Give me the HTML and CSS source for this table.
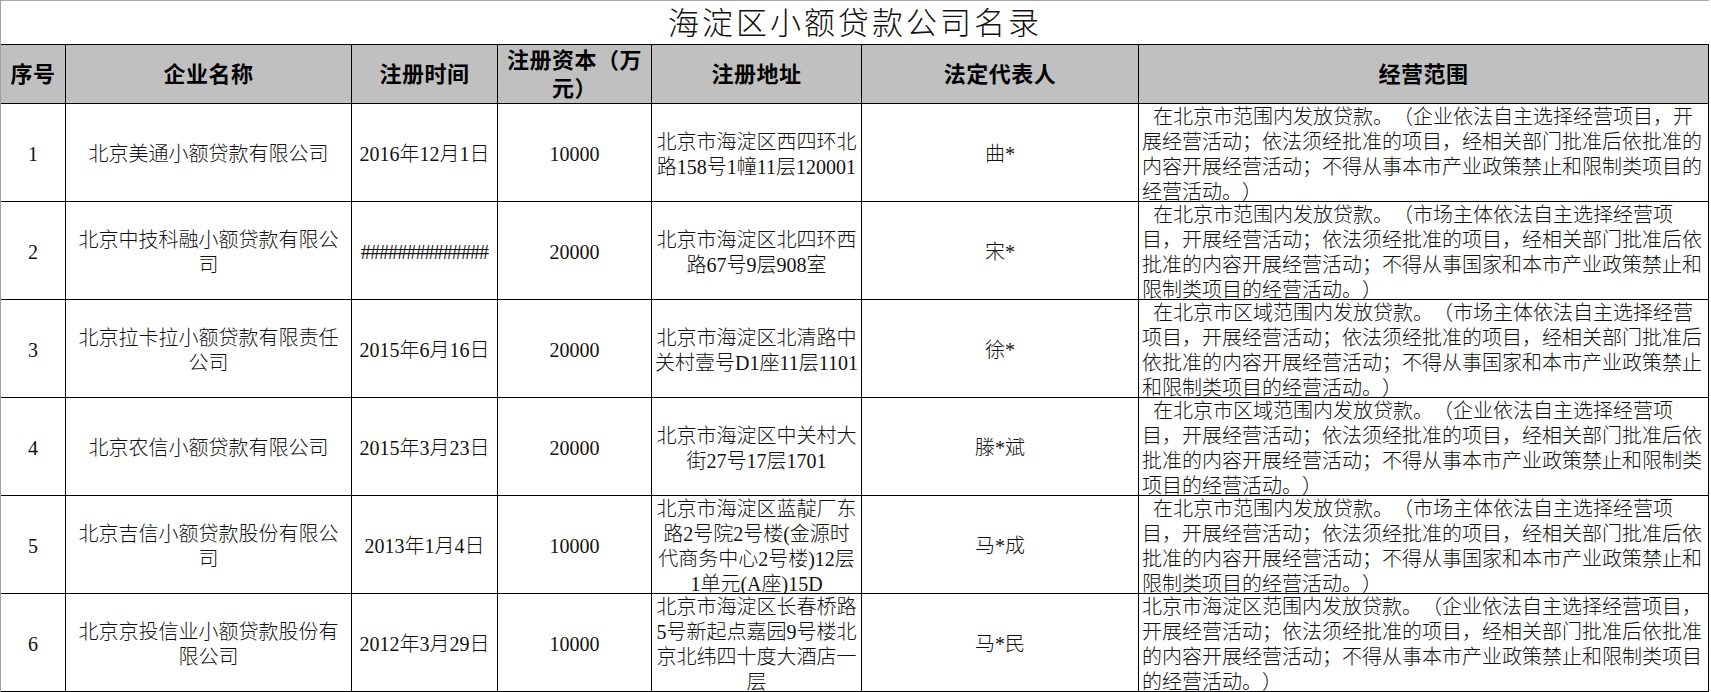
FILE: index.html
```html
<!DOCTYPE html>
<html lang="zh-CN">
<head>
<meta charset="utf-8">
<title>海淀区小额贷款公司名录</title>
<link rel="stylesheet" href="styles.css">
</head>
<body>
<div class="sheet">
  <div class="title">海淀区小额贷款公司名录</div>
  <div class="grid">
    <div class="cell head">序号</div>
    <div class="cell head">企业名称</div>
    <div class="cell head">注册时间</div>
    <div class="cell head">注册资本（万<br>元）</div>
    <div class="cell head">注册地址</div>
    <div class="cell head">法定代表人</div>
    <div class="cell head">经营范围</div>

    <div class="cell">1</div>
    <div class="cell">北京美通小额贷款有限公司</div>
    <div class="cell">2016年12月1日</div>
    <div class="cell">10000</div>
    <div class="cell">北京市海淀区西四环北<br>路158号1幢11层120001</div>
    <div class="cell">曲*</div>
    <div class="cell scope indent"><p>在北京市范围内发放贷款。（企业依法自主选择经营项目，开<br>展经营活动；依法须经批准的项目，经相关部门批准后依批准的<br>内容开展经营活动；不得从事本市产业政策禁止和限制类项目的<br>经营活动。）</p></div>

    <div class="cell">2</div>
    <div class="cell">北京中技科融小额贷款有限公<br>司</div>
    <div class="cell"><span class="hashes">##############</span></div>
    <div class="cell">20000</div>
    <div class="cell">北京市海淀区北四环西<br>路67号9层908室</div>
    <div class="cell">宋*</div>
    <div class="cell scope indent"><p>在北京市范围内发放贷款。（市场主体依法自主选择经营项<br>目，开展经营活动；依法须经批准的项目，经相关部门批准后依<br>批准的内容开展经营活动；不得从事国家和本市产业政策禁止和<br>限制类项目的经营活动。）</p></div>

    <div class="cell">3</div>
    <div class="cell">北京拉卡拉小额贷款有限责任<br>公司</div>
    <div class="cell">2015年6月16日</div>
    <div class="cell">20000</div>
    <div class="cell">北京市海淀区北清路中<br>关村壹号D1座11层1101</div>
    <div class="cell">徐*</div>
    <div class="cell scope indent"><p>在北京市区域范围内发放贷款。（市场主体依法自主选择经营<br>项目，开展经营活动；依法须经批准的项目，经相关部门批准后<br>依批准的内容开展经营活动；不得从事国家和本市产业政策禁止<br>和限制类项目的经营活动。）</p></div>

    <div class="cell">4</div>
    <div class="cell">北京农信小额贷款有限公司</div>
    <div class="cell">2015年3月23日</div>
    <div class="cell">20000</div>
    <div class="cell">北京市海淀区中关村大<br>街27号17层1701</div>
    <div class="cell">滕*斌</div>
    <div class="cell scope indent"><p>在北京市区域范围内发放贷款。（企业依法自主选择经营项<br>目，开展经营活动；依法须经批准的项目，经相关部门批准后依<br>批准的内容开展经营活动；不得从事本市产业政策禁止和限制类<br>项目的经营活动。）</p></div>

    <div class="cell">5</div>
    <div class="cell">北京吉信小额贷款股份有限公<br>司</div>
    <div class="cell">2013年1月4日</div>
    <div class="cell">10000</div>
    <div class="cell">北京市海淀区蓝靛厂东<br>路2号院2号楼(金源时<br>代商务中心2号楼)12层<br>1单元(A座)15D</div>
    <div class="cell">马*成</div>
    <div class="cell scope indent"><p>在北京市范围内发放贷款。（市场主体依法自主选择经营项<br>目，开展经营活动；依法须经批准的项目，经相关部门批准后依<br>批准的内容开展经营活动；不得从事国家和本市产业政策禁止和<br>限制类项目的经营活动。）</p></div>

    <div class="cell">6</div>
    <div class="cell">北京京投信业小额贷款股份有<br>限公司</div>
    <div class="cell">2012年3月29日</div>
    <div class="cell">10000</div>
    <div class="cell">北京市海淀区长春桥路<br>5号新起点嘉园9号楼北<br>京北纬四十度大酒店一<br>层</div>
    <div class="cell">马*民</div>
    <div class="cell scope"><p>北京市海淀区范围内发放贷款。（企业依法自主选择经营项目，<br>开展经营活动；依法须经批准的项目，经相关部门批准后依批准<br>的内容开展经营活动；不得从事本市产业政策禁止和限制类项目<br>的经营活动。）</p></div>
  </div>
</div>
</body>
</html>
```

FILE: styles.css
```css
html, body {
  margin: 0;
  padding: 0;
  background: #ffffff;
}

body {
  font-family: "Liberation Serif", "Noto Sans CJK SC", serif;
  color: #111111;
  text-spacing-trim: space-all;
}

.sheet {
  width: 1709px;
  border-left: 1px solid #a0a0a0;
  box-sizing: border-box;
}

.title {
  height: 44px;
  box-sizing: border-box;
  border-top: 1px solid #a8a8a8;
  padding-top: 3px;
  display: flex;
  align-items: center;
  justify-content: center;
  font-size: 31px;
  font-weight: 300;
  letter-spacing: 3px;
  line-height: 36px;
  white-space: nowrap;
}

.grid {
  display: grid;
  grid-template-columns: 65px 286px 146px 154px 210px 277px 570px;
  grid-template-rows: 60px repeat(6, 98px);
}

.cell {
  box-sizing: border-box;
  border-right: 1px solid #000000;
  border-bottom: 1px solid #000000;
  display: flex;
  align-items: center;
  justify-content: center;
  text-align: center;
  overflow: hidden;
  font-size: 20px;
  font-weight: 300;
  line-height: 25px;
  white-space: nowrap;
  padding-top: 4px;
  text-spacing-trim: space-all;
}

.head {
  background: #c0c0c0;
  border-top: 1px solid #000000;
  font-size: 22px;
  font-weight: 700;
  letter-spacing: 0.5px;
  line-height: 28px;
  padding-top: 2px;
  color: #000000;
}

.scope {
  justify-content: flex-start;
  text-align: left;
  padding-left: 3px;
}

.scope p {
  margin: 0;
}

.scope.indent p {
  text-indent: 11px;
}

.hashes {
  letter-spacing: -0.9px;
}
```
